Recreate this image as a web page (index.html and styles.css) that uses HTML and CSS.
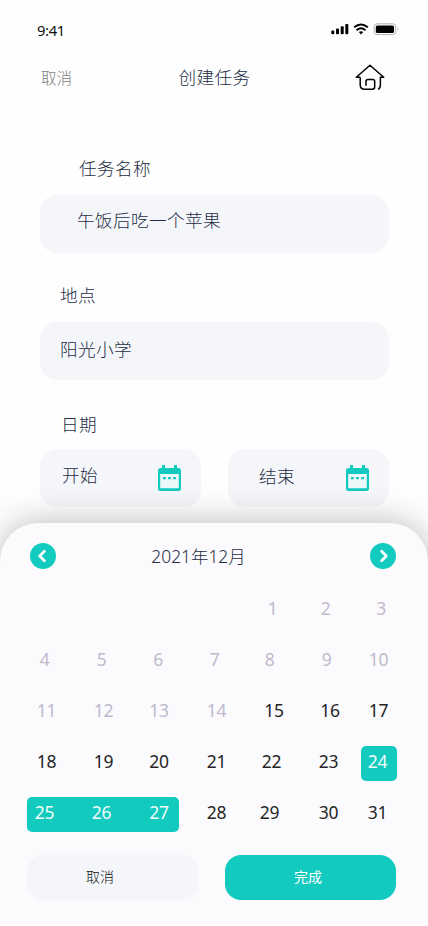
FILE: index.html
```html
<!DOCTYPE html>
<html lang="zh-CN">
<head>
<meta charset="utf-8">
<title>创建任务</title>
<link rel="stylesheet" href="styles.css">
</head>
<body>
<main class="screen">
  <div class="status">
    <span class="time">9:41</span>
    <svg class="status-icons" width="68" height="14" viewBox="0 0 68 14">
      <rect x="0.3" y="7.5" width="3" height="3.8" rx="1"/>
      <rect x="5" y="5.6" width="3" height="5.7" rx="1"/>
      <rect x="9.7" y="3.3" width="3" height="8" rx="1"/>
      <rect x="14.3" y="1" width="3" height="10.3" rx="1"/>
      <path d="M23.2 4.3Q30 -1.4 36.8 4.3M25.5 7.2Q30 3.4 34.5 7.2" fill="none" stroke="#000" stroke-width="2"/>
      <path d="M27.8 9.1Q30 7.5 32.2 9.1L30 11.5Z"/>
      <rect x="43.1" y="0.8" width="21.6" height="10.8" rx="3" fill="none" stroke="#b0b0b0"/>
      <rect x="44.8" y="2.4" width="18.2" height="7.6" rx="1.6"/>
      <path d="M66 4.5Q67.4 6.2 66 8Z" fill="#999"/>
    </svg>
  </div>
  <header class="header">
    <span class="cancel">取消</span>
    <h1 class="title">创建任务</h1>
    <svg class="home" width="30" height="28" viewBox="0 0 30 28">
      <path d="M5.2 13.3H1.3L15 1.3L28.7 13.3H25.4V20.8Q25.4 24.3 23.2 25.4M5.2 13.3V20.8Q5.2 25.3 9.8 25.3H17.3Q19.7 25.3 19.7 22.8V17.4Q19.7 15.4 17.7 15.4H13Q11 15.4 11 17.4V21.7" fill="none" stroke="#000" stroke-width="1.5" stroke-linejoin="round"/>
    </svg>
  </header>
  <section class="form">
    <label class="label label-name">任务名称</label>
    <div class="field field-name">午饭后吃一个苹果</div>
    <label class="label label-place">地点</label>
    <div class="field field-place">阳光小学</div>
    <label class="label label-date">日期</label>
    <div class="dates">
      <div class="field date start"><span>开始</span>
        <svg class="cal" width="23" height="26" viewBox="0 0 23 26"><path class="cal-page" d="M2 8H21V24H2Z"/><path fill-rule="evenodd" d="M4 0H7V3H16V0H19V3H20.5Q23 3 23 5.5V23.5Q23 26 20.5 26H2.5Q0 26 0 23.5V5.5Q0 3 2.5 3H4ZM2.2 9V23.2H20.8V9ZM5 12H7.8V14.3H5ZM10.1 12H12.9V14.3H10.1ZM15.2 12H18V14.3H15.2Z"/></svg>
      </div>
      <div class="field date end"><span>结束</span>
        <svg class="cal" width="23" height="26" viewBox="0 0 23 26"><path class="cal-page" d="M2 8H21V24H2Z"/><path fill-rule="evenodd" d="M4 0H7V3H16V0H19V3H20.5Q23 3 23 5.5V23.5Q23 26 20.5 26H2.5Q0 26 0 23.5V5.5Q0 3 2.5 3H4ZM2.2 9V23.2H20.8V9ZM5 12H7.8V14.3H5ZM10.1 12H12.9V14.3H10.1ZM15.2 12H18V14.3H15.2Z"/></svg>
      </div>
    </div>
  </section>
  <section class="sheet">
    <div class="month">
      <svg width="26" height="26" viewBox="0 0 26 26"><circle cx="13" cy="13" r="13" fill="#13cabe"/><path d="M14.4 8.3L9.7 13L14.4 17.7" class="chev"/></svg>
      <h2 class="month-name">2021年12月</h2>
      <svg width="26" height="26" viewBox="0 0 26 26"><circle cx="13" cy="13" r="13" fill="#13cabe"/><path d="M11.6 8.3L16.3 13L11.6 17.7" class="chev"/></svg>
    </div>
    <div class="days">
      <i class="mark mark-day"></i><i class="mark mark-range"></i>
      <span class="d w1 c5 off r1">1</span><span class="d w1 c6 off l2">2</span><span class="d w1 c7 off r3">3</span>
      <span class="d w2 c1 off l1">4</span><span class="d w2 c2 off l1">5</span><span class="d w2 c3 off l1">6</span><span class="d w2 c4 off l1">7</span><span class="d w2 c5 off l2">8</span><span class="d w2 c6 off l1">9</span><span class="d w2 c7 off">10</span>
      <span class="d w3 c1 off r1">11</span><span class="d w3 c2 off r1">12</span><span class="d w3 c3 off">13</span><span class="d w3 c4 off r1">14</span><span class="d w3 c5 r3">15</span><span class="d w3 c6 r3">16</span><span class="d w3 c7">17</span>
      <span class="d w4 c1 r1">18</span><span class="d w4 c2 r1">19</span><span class="d w4 c3">20</span><span class="d w4 c4 r1">21</span><span class="d w4 c5">22</span><span class="d w4 c6 r1">23</span><span class="d w4 c7 on l1">24</span>
      <span class="d w5 c1 on l1">25</span><span class="d w5 c2 on l1">26</span><span class="d w5 c3 on">27</span><span class="d w5 c4 r1">28</span><span class="d w5 c5 l2">29</span><span class="d w5 c6 r1">30</span><span class="d w5 c7 l1">31</span>
    </div>
    <div class="actions">
      <button class="btn">取消</button>
      <button class="btn primary">完成</button>
    </div>
  </section>
</main>
</body>
</html>
```
FILE: styles.css
```css
* { box-sizing: border-box; }
body { margin: 0; background: #fefefe; }
.screen {
  width: 428px; height: 926px; overflow: hidden;
  display: flex; flex-direction: column;
  font-family: "Open Sans", "Noto Sans CJK SC", sans-serif;
  font-weight: 300; font-size: 17.6px; letter-spacing: 0.4px; color: #242c44;
}
.status {
  height: 50px; padding: 18px 29px 0 37px;
  display: flex; justify-content: space-between; align-items: flex-start;
}
.time { font-family: "Noto Sans", sans-serif; font-size: 14.8px; line-height: 24px; letter-spacing: -0.4px; font-weight: 400; color: #111; }
.status-icons { margin-top: 5px; }
.header {
  height: 56px; padding: 0 43px 0 41px;
  display: grid; grid-template-columns: 1fr auto 1fr; align-items: center;
}
.cancel { font-size: 15.6px; color: #808080; line-height: 24px; letter-spacing: 0; }
.title { margin: 0; padding: 0 0 2px 3px; font-size: inherit; font-weight: 300; line-height: 24px; }
.home { justify-self: end; }
.form { height: 417px; padding: 49px 39px 0 40px; display: flex; flex-direction: column; }
.label { height: 40px; line-height: 26px; flex: none; }
.label-name { padding-left: 39px; }
.label-place { margin-top: 29px; padding-left: 20px; }
.label-date { margin-top: 31px; padding-left: 21px; height: 38px; }
.field { height: 58px; flex: none; border-radius: 17px; background: #f4f6fa; line-height: 50px; }
.field-name { padding-left: 37px; }
.field-place { padding-left: 20px; line-height: 55px; }
.dates { display: flex; justify-content: space-between; }
.date { width: 161px; display: flex; justify-content: space-between; padding: 0 20px 0 22px; line-height: 52px; }
.end { padding-left: 31px; line-height: 54px; }
.cal { margin-top: 16px; fill: #13cabe; }
.cal-page { fill: #edf8fa; }
.sheet {
  height: 403px; flex: none; padding-top: 20px;
  border-radius: 38px 38px 0 0; background: #fbfbfe;
  box-shadow: 0 0 34px rgba(0, 0, 0, 0.28);
}
.month { height: 26px; padding: 0 32px 0 30px; display: flex; justify-content: space-between; align-items: center; }
.month-name { margin: 0; font-family: "Noto Sans", "Noto Sans CJK SC", sans-serif; font-size: 17.4px; font-weight: 300; line-height: 26px; letter-spacing: 0; padding: 0 29px 1px 0; }
.chev { fill: none; stroke: #fff; stroke-width: 2.7; stroke-linecap: round; stroke-linejoin: round; }
.days {
  margin: 24px 27px 0 17px; display: grid;
  grid-template-columns: 57px 57px 56px 57px 55px 57px 45px;
  grid-template-rows: repeat(5, 35px); row-gap: 16px;
  font-family: "Noto Sans", sans-serif;
  font-size: 17.5px; font-weight: 400; letter-spacing: -0.3px; color: #262626;
}
.d { text-align: center; line-height: 31px; }
.w1 { grid-row: 1; } .w2 { grid-row: 2; } .w3 { grid-row: 3; } .w4 { grid-row: 4; } .w5 { grid-row: 5; }
.c1 { grid-column: 1; } .c2 { grid-column: 2; } .c3 { grid-column: 3; } .c4 { grid-column: 4; }
.c5 { grid-column: 5; } .c6 { grid-column: 6; } .c7 { grid-column: 7; }
.off { color: #c0b9cd; }
.on { color: #f0fcfb; }
.r1 { padding-left: 2px; } .r3 { padding-left: 5px; }
.l1 { padding-right: 2px; } .l2 { padding-right: 4px; }
.mark { border-radius: 5px; background: #13cabe; }
.mark-day { grid-area: 4 / 7; margin: 0 4px 0 5px; }
.mark-range { grid-area: 5 / 1 / 6 / 4; margin: 0 8px 0 10px; }
.actions { margin: 23px 32px 0 27px; display: flex; justify-content: space-between; }
.btn {
  width: 171px; height: 45px; padding: 0 25px 4px 0; border: 0; border-radius: 16px;
  background: #f4f6fa; color: #111; font: inherit; font-size: 14px; letter-spacing: 0;
}
.primary { background: #13cabe; color: #fff; font-weight: 400; padding-right: 5px; }
```
